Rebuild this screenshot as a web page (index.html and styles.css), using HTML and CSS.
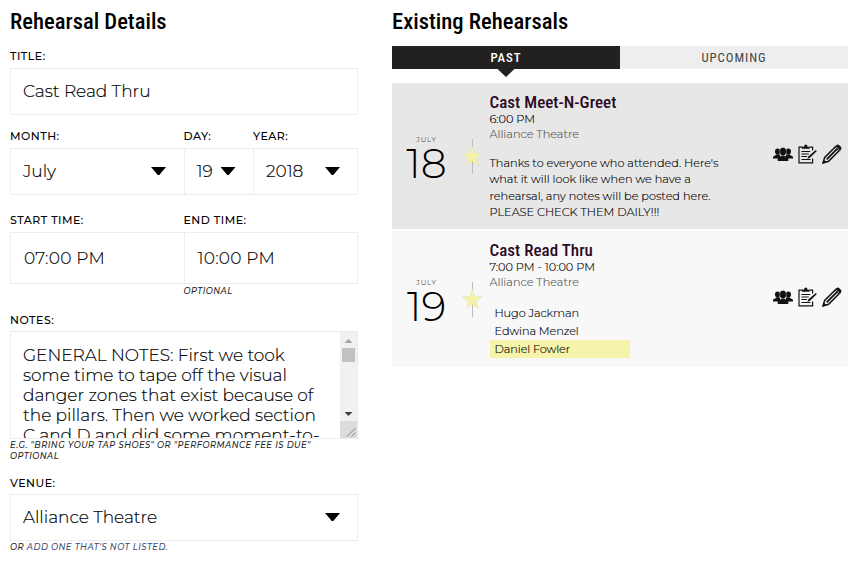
FILE: index.html
```html
<!DOCTYPE html>
<html lang="en">
<head>
<meta charset="utf-8">
<title>Rehearsals</title>
<link rel="stylesheet" href="styles.css">
</head>
<body>
<svg class="defs" width="0" height="0">
  <symbol id="people" viewBox="0 0 20 15">
    <ellipse cx="4.600" cy="4.600" rx="2.600" ry="3.100"/><ellipse cx="15.400" cy="4.600" rx="2.600" ry="3.100"/>
    <path d="M0 11.500V10Q.2 8.900 2 8.400L3.600 7.500H7V11.500ZM20 11.500V10Q19.800 8.900 18 8.400L16.400 7.500H13V11.500Z"/>
    <path d="M4.700 14V11.600Q4.900 10.100 6.700 9.600L8.700 8.900V7H11.300V8.900L13.300 9.600Q15.100 10.100 15.300 11.600V14Z"/>
    <ellipse cx="10" cy="4.600" rx="3.300" ry="4.100" stroke="#e7e7e7" stroke-width=".4"/>
  </symbol>
  <symbol id="notes" viewBox="0 0 19 20">
    <path d="M4.500 3.200H1V18.800H14.600V14.500M11.500 3.200H14.600V6.500" fill="none" stroke="#111" stroke-width="1.200"/>
    <path d="M4 4.800V2.800H6Q6.400.6 7.800.6T9.600 2.800H11.600V4.800Z"/>
    <path d="M3.400 7.500H12.200M3.400 10H10.800M3.400 12.500H9M3.400 15.500H12.500" stroke="#111" stroke-width="1.200"/>
    <path d="M17.800 5.900L18.900 7L11.700 13.900L9.300 14.800L10.300 12.400Z"/>
  </symbol>
  <symbol id="pencil" viewBox="0 0 20 20">
    <path d="M1 19L2.700 13.400L13.900 2.200L17.800 6.100L6.600 17.300Z" fill="none" stroke="#111" stroke-width="1.500"/>
    <path d="M.5 19.500L1.700 15.600L4.400 18.300ZM12.600 3L15 .7Q16 .1 17 .9L19.100 3Q19.900 4 19.200 5L17 7.400Z"/>
    <path d="M4.700 15.300L15.600 4.400" stroke="#111" stroke-width="1.800"/>
    <path d="M13.700 2.500L17.500 6.300" stroke="#eee" stroke-width=".7"/>
  </symbol>
  <symbol id="star" viewBox="0 0 22 36">
    <path d="M11.500 1V36" stroke="#bdbdbd" stroke-width="1"/>
    <path d="M11.300 8L13.800 15.400L21.300 15.500L15.300 20.200L17.500 27.700L11.300 23.300L5.100 27.700L7.300 20.200L1.300 15.500L8.800 15.400Z" fill="#f5f3a6" stroke="#dddcc0" stroke-width=".4"/>
  </symbol>
</svg>
<main class="page">
  <form class="details">
    <h2>Rehearsal Details</h2>
    <div class="row title">
      <div class="field"><label>Title:</label><div class="box">Cast Read Thru</div></div>
    </div>
    <div class="row date">
      <div class="field"><label>Month:</label><div class="box select">July<i class="caret"></i></div></div>
      <div class="field"><label>Day:</label><div class="box select">19<i class="caret"></i></div></div>
      <div class="field"><label>Year:</label><div class="box select">2018<i class="caret"></i></div></div>
    </div>
    <div class="row time">
      <div class="field"><label>Start Time:</label><div class="box">07:00 PM</div></div>
      <div class="field"><label>End Time:</label><div class="box">10:00 PM</div><p class="hint">Optional</p></div>
    </div>
    <div class="row notes">
      <div class="field"><label>Notes:</label>
        <div class="box area">
          <div class="copy">GENERAL NOTES: First we took<br>some time to tape off the visual<br>danger zones that exist because of<br>the pillars. Then we worked section<br>C and D and did some moment-to-</div>
          <div class="scroll"><i class="up"></i><i class="thumb"></i><i class="down"></i>
            <svg class="grip" viewBox="0 0 17 17"><path d="M7 15.500L15.500 7M11.500 15.500L15.500 11.500" stroke="#777" stroke-width=".9"/></svg>
          </div>
        </div>
        <p class="hint">E.G. "Bring your tap shoes" or "Performance fee is due"<br>Optional</p>
      </div>
    </div>
    <div class="row venue">
      <div class="field"><label>Venue:</label><div class="box select">Alliance Theatre<i class="caret"></i></div>
        <p class="hint">Or <a>add one that's not listed.</a></p></div>
    </div>
  </form>
  <section class="existing">
    <h2>Existing Rehearsals</h2>
    <nav class="tabs"><span class="tab active">Past</span><span class="tab">Upcoming</span></nav>
    <article class="card past">
      <div class="day"><span>July</span><b>18</b></div>
      <svg class="star"><use href="#star"/></svg>
      <div class="info">
        <h3>Cast Meet-N-Greet</h3>
        <p class="when">6:00 PM</p>
        <p class="where">Alliance Theatre</p>
        <p class="message">Thanks to everyone who attended. Here's<br>what it will look like when we have a<br>rehearsal, any notes will be posted here.<br>PLEASE CHECK THEM DAILY!!!</p>
      </div>
      <div class="actions"><svg class="i-people"><use href="#people"/></svg><svg class="i-notes"><use href="#notes"/></svg><svg class="i-pencil"><use href="#pencil"/></svg></div>
    </article>
    <article class="card next">
      <div class="day"><span>July</span><b>19</b></div>
      <svg class="star"><use href="#star"/></svg>
      <div class="info">
        <h3>Cast Read Thru</h3>
        <p class="when">7:00 PM - 10:00 PM</p>
        <p class="where">Alliance Theatre</p>
        <ul><li>Hugo Jackman</li><li>Edwina Menzel</li><li class="marked">Daniel Fowler</li></ul>
      </div>
      <div class="actions"><svg class="i-people"><use href="#people"/></svg><svg class="i-notes"><use href="#notes"/></svg><svg class="i-pencil"><use href="#pencil"/></svg></div>
    </article>
  </section>
</main>
</body>
</html>
```
FILE: styles.css
```css
* { box-sizing: border-box; margin: 0; padding: 0; }
body { background: #fff; color: #000; font: 300 17px/20px Montserrat, Inter, sans-serif; overflow: hidden; }
.defs { display: block; height: 0; }
.page { display: flex; height: 571px; padding: 8px 8px 0 10px; }
.details { width: 348px; margin-right: 34px; }
.existing { flex: 1; }
h2 { font: 500 22.6px/27px "Roboto Condensed", Roboto, sans-serif; color: #000; white-space: nowrap; }

.details h2 { margin-bottom: 14px; }
.row { display: flex; }
.field { display: flex; flex-direction: column; flex: 1; }
label { font-size: 11px; font-weight: 500; line-height: 14px; letter-spacing: .5px; text-transform: uppercase; margin-bottom: 5px; white-space: nowrap; }
.notes label, .venue label { margin-bottom: 4px; }
.box { display: flex; align-items: center; height: 47px; border: 1px solid #ededed; padding-left: 12px; background: #fff; white-space: nowrap; letter-spacing: -.03px; -webkit-text-stroke: .15px #000; }
.title .box, .date .box, .venue .box { padding-bottom: 1px; }
.date .field:not(:last-child) .box, .time .field:first-child .box { border-right: 0; }
.title { height: 80px; }
.date { height: 84px; }
.time { height: 100px; }
.notes { height: 163px; }
.date .field { flex: none; width: 173.5px; }
.date .field:nth-child(2) { width: 69.5px; }
.date .field:nth-child(3) { width: 105px; }
.time .field:first-child { flex: none; width: 173.5px; }
.select { justify-content: space-between; padding-right: 17px; }
.date .field:nth-child(2) .select, .date .field:first-child .select { padding-right: 17.500px; }
.caret { width: 15px; height: 8px; background: #000; clip-path: polygon(0 0, 100% 0, 55% 100%, 45% 100%); }
.time .box { height: 52px; letter-spacing: .25px; padding: 0 0 1px 13px; }
.hint { font-size: 8.400px; font-style: italic; font-weight: 500; line-height: 11px; letter-spacing: .49px; text-transform: uppercase; white-space: nowrap; color: #222; }
.time .hint { margin-top: 2px; }
.hint a { color: #3f4c78; }
.area { height: 108px; align-items: stretch; overflow: hidden; }
.notes .hint { margin-top: 1px; }
.venue .hint { margin-top: 1px; }
.copy { flex: 1; padding-top: 13px; line-height: 20px; }
.scroll { width: 17px; background: #f1f1f1; display: flex; flex-direction: column; align-items: center; }
.up, .down { width: 8px; height: 4px; margin-top: 7px; background: #a3a3a3; clip-path: polygon(50% 0, 100% 100%, 0 100%); }
.thumb { width: 13px; height: 14px; margin-top: 5px; background: #c1c1c1; }
.down { margin-top: 50px; background: #404040; clip-path: polygon(0 0, 100% 0, 50% 100%); }
.grip { width: 17px; height: 17px; margin-top: auto; background: #dcdcdc; }

.existing h2 { margin-bottom: 11px; }
.tabs { display: flex; height: 23px; margin-bottom: 14px; }
.tab { flex: 1; position: relative; background: #eee; color: #444; text-align: center; text-transform: uppercase; font: 400 12.800px/24px "Roboto Condensed", Roboto, sans-serif; letter-spacing: .95px; }
.active { background: #22211f; color: #fff; font-weight: 500; }
.active::after { content: ""; position: absolute; left: 50%; top: 23px; margin-left: -8.500px; width: 17px; height: 8px; background: #22211f; clip-path: polygon(0 0, 100% 0, 50% 100%); }
.card { display: flex; align-items: center; height: 146px; margin-bottom: 2px; background: #e7e7e7; }
.next { height: 136px; background: #f8f8f8; }
.day { width: 69px; padding-top: 4px; display: flex; flex-direction: column; align-items: center; }
.next .day { padding-top: 5px; }
.day span { font-size: 7px; font-weight: 400; line-height: 9px; letter-spacing: .8px; text-transform: uppercase; color: #555; }
.day b { font-weight: 300; font-size: 41px; line-height: 38px; color: #000; }
.star { width: 22px; height: 36px; }
.info { flex: 1; align-self: stretch; padding: 10px 0 0 6.500px; font-size: 11.3px; line-height: 15px; white-space: nowrap; }
.info p, .info ul { -webkit-text-stroke: .15px currentColor; }
h3 { font: 500 17px/19px "Roboto Condensed", Roboto, sans-serif; color: #2b0a24; letter-spacing: .04px; }
.where { color: #555; }
.message { line-height: 16.300px; margin-top: 13px; }
ul { list-style: none; width: 140px; margin-top: 14px; }
li { height: 18px; line-height: 18px; padding-left: 5px; letter-spacing: -.08px; }
.marked { background: #f6f4aa; }
.actions { display: flex; align-items: center; padding: 0 6px 4px 0; fill: #111; }
.i-people { width: 20px; height: 15px; margin-right: 5px; }
.i-notes { width: 19px; height: 20px; margin-right: 5px; }
.i-pencil { width: 20px; height: 20px; }
```
